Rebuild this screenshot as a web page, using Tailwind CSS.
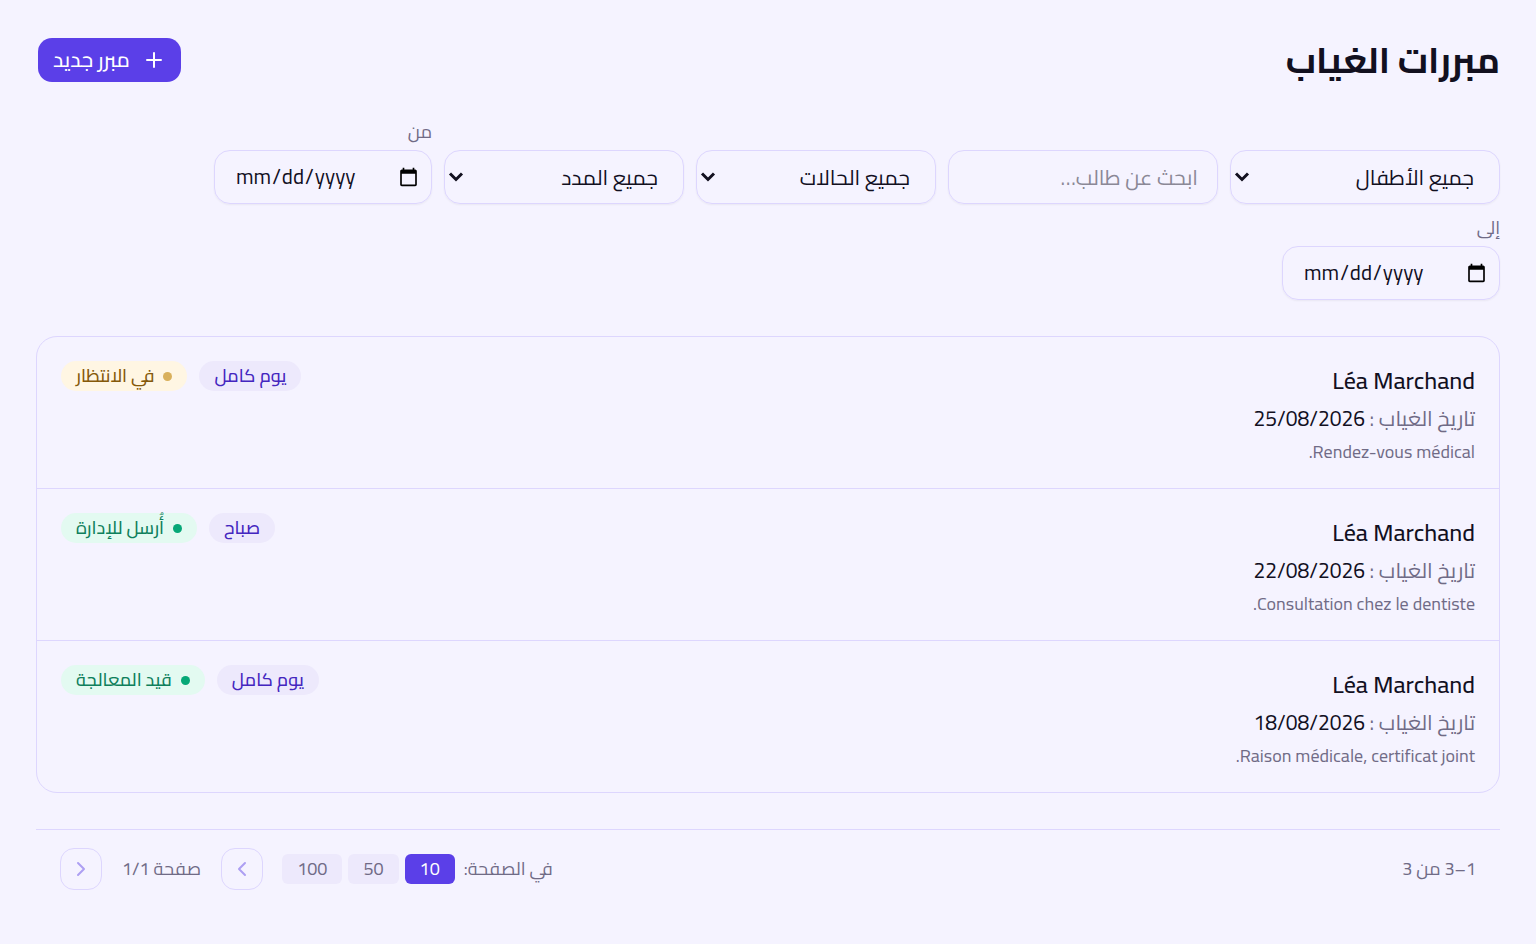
<!DOCTYPE html>
<html lang="ar" dir="rtl">
<head>
  <meta charset="UTF-8" />
  <meta name="viewport" content="width=device-width, initial-scale=1.0" />
  <title>مبررات الغياب</title>
  <script src="https://cdn.jsdelivr.net/npm/@tailwindcss/browser@4"></script>
</head>
<body class="min-h-screen bg-[#f5f3ff] p-9 font-['Cairo','Noto_Sans','DejaVu_Sans',sans-serif] text-[21px] leading-8 text-[#12101f]">

  <header class="flex items-center justify-between">
    <h1 class="text-[36px] leading-[46px] font-bold">مبررات الغياب</h1>
    <button type="button" class="flex h-12 items-center gap-3 rounded-2xl border-2 border-transparent bg-[#5b3fe8] bg-clip-padding px-[15px] font-medium text-white">
      <svg class="size-6" viewBox="0 0 24 24" fill="none" stroke="currentColor" stroke-width="2" stroke-linecap="round"><path d="M5 12h14M12 5v14" /></svg>
      مبرر جديد
    </button>
  </header>

  <!-- الفلاتر -->
  <form class="mt-9 flex flex-wrap items-end gap-3">
    <div class="relative w-[270px]">
      <select aria-label="الأطفال" class="h-[54px] w-full appearance-none rounded-2xl border border-[#ddd6fe] px-[25px] pt-0.5 shadow-xs">
        <option>جميع الأطفال</option>
      </select>
      <svg class="pointer-events-none absolute top-[19px] left-1 size-4" viewBox="0 0 16 16" fill="none" stroke="currentColor" stroke-width="3"><path d="M2 4.5l6 6 6-6" /></svg>
    </div>
    <input type="text" aria-label="بحث" placeholder="ابحث عن طالب…" class="h-[54px] w-[270px] rounded-2xl border border-[#ddd6fe] px-[19px] shadow-xs placeholder:text-[#8b8896]" />
    <div class="relative w-60">
      <select aria-label="الحالة" class="h-[54px] w-full appearance-none rounded-2xl border border-[#ddd6fe] px-[25px] pt-0.5 shadow-xs">
        <option>جميع الحالات</option>
      </select>
      <svg class="pointer-events-none absolute top-[19px] left-1 size-4" viewBox="0 0 16 16" fill="none" stroke="currentColor" stroke-width="3"><path d="M2 4.5l6 6 6-6" /></svg>
    </div>
    <div class="relative w-60">
      <select aria-label="المدة" class="h-[54px] w-full appearance-none rounded-2xl border border-[#ddd6fe] px-[25px] pt-0.5 shadow-xs">
        <option>جميع المدد</option>
      </select>
      <svg class="pointer-events-none absolute top-[19px] left-1 size-4" viewBox="0 0 16 16" fill="none" stroke="currentColor" stroke-width="3"><path d="M2 4.5l6 6 6-6" /></svg>
    </div>
    <div class="flex w-[218px] flex-col gap-1.5">
      <label for="from" class="text-lg leading-6 text-[#706b86]">من</label>
      <input id="from" type="date" dir="ltr" class="h-[54px] w-full rounded-2xl border border-[#ddd6fe] pr-2.5 pl-5 shadow-xs" />
    </div>
    <div class="flex w-[218px] flex-col gap-1.5">
      <label for="to" class="text-lg leading-6 text-[#706b86]">إلى</label>
      <input id="to" type="date" dir="ltr" class="h-[54px] w-full rounded-2xl border border-[#ddd6fe] pr-2.5 pl-5 shadow-xs" />
    </div>
  </form>

  <!-- قائمة المبررات -->
  <ul class="mt-9 divide-y divide-[#ddd6fe] rounded-[21px] border border-[#ddd6fe]">
    <li class="flex items-start justify-between p-6">
      <div>
        <p class="text-2xl leading-10 font-medium">Léa Marchand</p>
        <p class="leading-9 text-[#706b86]">تاريخ الغياب : <span class="text-[#12101f]">25/08/2026</span></p>
        <p class="mt-0.5 text-lg leading-[25px] text-[#706b86]">Rendez-vous médical.</p>
      </div>
      <div class="flex gap-3 text-lg leading-[30px] font-medium">
        <span class="rounded-full bg-[#ede9fc] px-[15px] text-[#4426bf]">يوم كامل</span>
        <span class="flex items-center gap-[9px] rounded-full bg-[#fff6e3] px-[15px] text-[#85590a]"><i class="size-[9px] rounded-full bg-[#d9b05b]"></i>في الانتظار</span>
      </div>
    </li>
    <li class="flex items-start justify-between p-6">
      <div>
        <p class="text-2xl leading-10 font-medium">Léa Marchand</p>
        <p class="leading-9 text-[#706b86]">تاريخ الغياب : <span class="text-[#12101f]">22/08/2026</span></p>
        <p class="mt-0.5 text-lg leading-[25px] text-[#706b86]">Consultation chez le dentiste.</p>
      </div>
      <div class="flex gap-3 text-lg leading-[30px] font-medium">
        <span class="rounded-full bg-[#ede9fc] px-[15px] text-[#4426bf]">صباح</span>
        <span class="flex items-center gap-[9px] rounded-full bg-[#e3faf1] px-[15px] text-[#0f7f5c]"><i class="size-[9px] rounded-full bg-[#06a877]"></i>أُرسل للإدارة</span>
      </div>
    </li>
    <li class="flex items-start justify-between p-6">
      <div>
        <p class="text-2xl leading-10 font-medium">Léa Marchand</p>
        <p class="leading-9 text-[#706b86]">تاريخ الغياب : <span class="text-[#12101f]">18/08/2026</span></p>
        <p class="mt-0.5 text-lg leading-[25px] text-[#706b86]">Raison médicale, certificat joint.</p>
      </div>
      <div class="flex gap-3 text-lg leading-[30px] font-medium">
        <span class="rounded-full bg-[#ede9fc] px-[15px] text-[#4426bf]">يوم كامل</span>
        <span class="flex items-center gap-[9px] rounded-full bg-[#e3faf1] px-[15px] text-[#0f7f5c]"><i class="size-[9px] rounded-full bg-[#06a877]"></i>قيد المعالجة</span>
      </div>
    </li>
  </ul>

  <!-- الترقيم -->
  <footer class="mt-9 flex items-center justify-between border-t border-[#ddd6fe] px-6 py-[18px] text-lg leading-[30px] text-[#706b86]">
    <p>1–3 من 3</p>
    <div class="flex items-center gap-[19px]">
      <div class="flex items-center gap-[9px]">
        <span>في الصفحة:</span>
        <div class="flex gap-1.5">
          <button type="button" class="rounded-md bg-[#5b3fe8] px-[15px] text-white">10</button>
          <button type="button" class="rounded-md bg-[#ede9fc] px-[15px]">50</button>
          <button type="button" class="rounded-md bg-[#ede9fc] px-[15px]">100</button>
        </div>
      </div>
      <nav class="flex items-center gap-5">
        <button type="button" aria-label="السابق" class="flex size-[42px] items-center justify-center rounded-[14px] border border-[#ddd6fe] text-[#ad9ff3]">
          <svg class="size-6" viewBox="0 0 24 24" fill="none" stroke="currentColor" stroke-width="2" stroke-linecap="round" stroke-linejoin="round"><path d="M15 18l-6-6 6-6" /></svg>
        </button>
        <span>صفحة 1/1</span>
        <button type="button" aria-label="التالي" class="flex size-[42px] items-center justify-center rounded-[14px] border border-[#ddd6fe] text-[#ad9ff3]">
          <svg class="size-6" viewBox="0 0 24 24" fill="none" stroke="currentColor" stroke-width="2" stroke-linecap="round" stroke-linejoin="round"><path d="M9 18l6-6-6-6" /></svg>
        </button>
      </nav>
    </div>
  </footer>

</body>
</html>
